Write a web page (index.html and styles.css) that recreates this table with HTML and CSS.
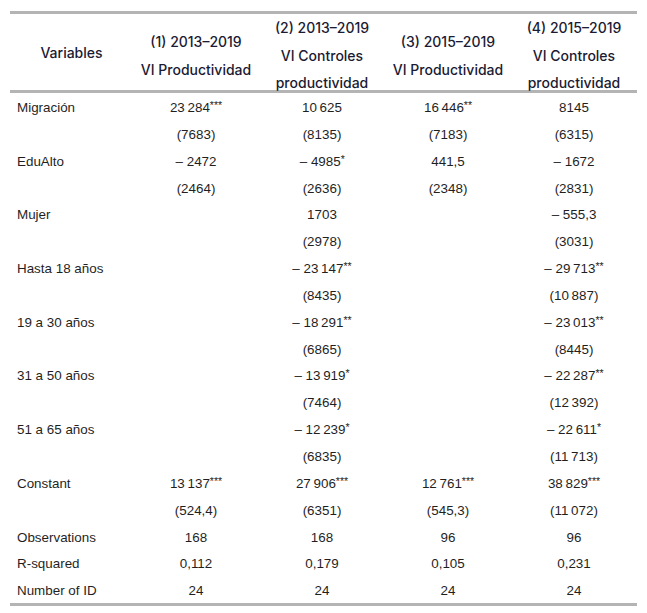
FILE: index.html
```html
<!DOCTYPE html>
<html lang="es">
<head>
<meta charset="utf-8">
<title>Tabla de regresión</title>
<link rel="stylesheet" href="styles.css">
</head>
<body>
<table class="reg">
  <colgroup>
    <col class="c-var">
    <col class="c-num"><col class="c-num"><col class="c-num"><col class="c-num">
  </colgroup>
  <thead>
    <tr>
      <th class="hv"><div class="h1">Variables</div></th>
      <th><div class="h">(1) 2013–2019<br>VI Productividad</div></th>
      <th><div class="h">(2) 2013–2019<br>VI Controles<br>productividad</div></th>
      <th><div class="h">(3) 2015–2019<br>VI Productividad</div></th>
      <th><div class="h">(4) 2015–2019<br>VI Controles<br>productividad</div></th>
    </tr>
  </thead>
  <tbody>
    <tr><td>Migración</td><td>23&#8239;284<sup>***</sup></td><td>10&#8239;625</td><td>16&#8239;446<sup>**</sup></td><td>8145</td></tr>
    <tr><td></td><td>(7683)</td><td>(8135)</td><td>(7183)</td><td>(6315)</td></tr>
    <tr><td>EduAlto</td><td>– 2472</td><td>– 4985<sup>*</sup></td><td>441,5</td><td>– 1672</td></tr>
    <tr><td></td><td>(2464)</td><td>(2636)</td><td>(2348)</td><td>(2831)</td></tr>
    <tr><td>Mujer</td><td></td><td>1703</td><td></td><td>– 555,3</td></tr>
    <tr><td></td><td></td><td>(2978)</td><td></td><td>(3031)</td></tr>
    <tr><td>Hasta 18 años</td><td></td><td>– 23&#8239;147<sup>**</sup></td><td></td><td>– 29&#8239;713<sup>**</sup></td></tr>
    <tr><td></td><td></td><td>(8435)</td><td></td><td>(10&#8239;887)</td></tr>
    <tr><td>19 a 30 años</td><td></td><td>– 18&#8239;291<sup>**</sup></td><td></td><td>– 23&#8239;013<sup>**</sup></td></tr>
    <tr><td></td><td></td><td>(6865)</td><td></td><td>(8445)</td></tr>
    <tr><td>31 a 50 años</td><td></td><td>– 13&#8239;919<sup>*</sup></td><td></td><td>– 22&#8239;287<sup>**</sup></td></tr>
    <tr><td></td><td></td><td>(7464)</td><td></td><td>(12&#8239;392)</td></tr>
    <tr><td>51 a 65 años</td><td></td><td>– 12&#8239;239<sup>*</sup></td><td></td><td>– 22&#8239;611<sup>*</sup></td></tr>
    <tr><td></td><td></td><td>(6835)</td><td></td><td>(11&#8239;713)</td></tr>
    <tr><td>Constant</td><td>13&#8239;137<sup>***</sup></td><td>27&#8239;906<sup>***</sup></td><td>12&#8239;761<sup>***</sup></td><td>38&#8239;829<sup>***</sup></td></tr>
    <tr><td></td><td>(524,4)</td><td>(6351)</td><td>(545,3)</td><td>(11&#8239;072)</td></tr>
    <tr><td>Observations</td><td>168</td><td>168</td><td>96</td><td>96</td></tr>
    <tr><td>R-squared</td><td>0,112</td><td>0,179</td><td>0,105</td><td>0,231</td></tr>
    <tr class="last"><td>Number of ID</td><td>24</td><td>24</td><td>24</td><td>24</td></tr>
  </tbody>
</table>
</body>
</html>
```
FILE: styles.css
```css
html, body {
  margin: 0;
  padding: 0;
  background: #ffffff;
}

.reg {
  margin: 11px 0 0 10px;
  width: 627px;
  border-collapse: collapse;
  table-layout: fixed;
  font-family: "Liberation Sans", Arial, sans-serif;
  font-size: 13.4px;
  color: #1f1f1f;
}

.c-var { width: 123px; }
.c-num { width: 126px; }

.reg thead tr {
  border-top: 3px solid #b4b4b4;
  border-bottom: 3px solid #b4b4b4;
}

.reg th {
  height: 76px;
  padding: 0;
  vertical-align: middle;
  text-align: center;
  font-family: Inter, "Liberation Sans", sans-serif;
  font-weight: 500;
  font-size: 14px;
  color: #1b1b33;
}

.reg th .h {
  line-height: 27.6px;
  margin: -3px 0 -10px 0;
}

.reg th .h1 {
  line-height: 27.6px;
  margin-top: 2px;
}

.reg td {
  padding: 3px 0 0 0;
  line-height: 23.85px;
  text-align: center;
  white-space: nowrap;
}

.reg td:first-child {
  text-align: left;
  padding-left: 7px;
}

.reg tbody tr.last {
  border-bottom: 3px solid #b4b4b4;
}

.reg sup {
  font-size: 10.5px;
  line-height: 0;
  vertical-align: 3px;
  letter-spacing: -0.5px;
}
```
